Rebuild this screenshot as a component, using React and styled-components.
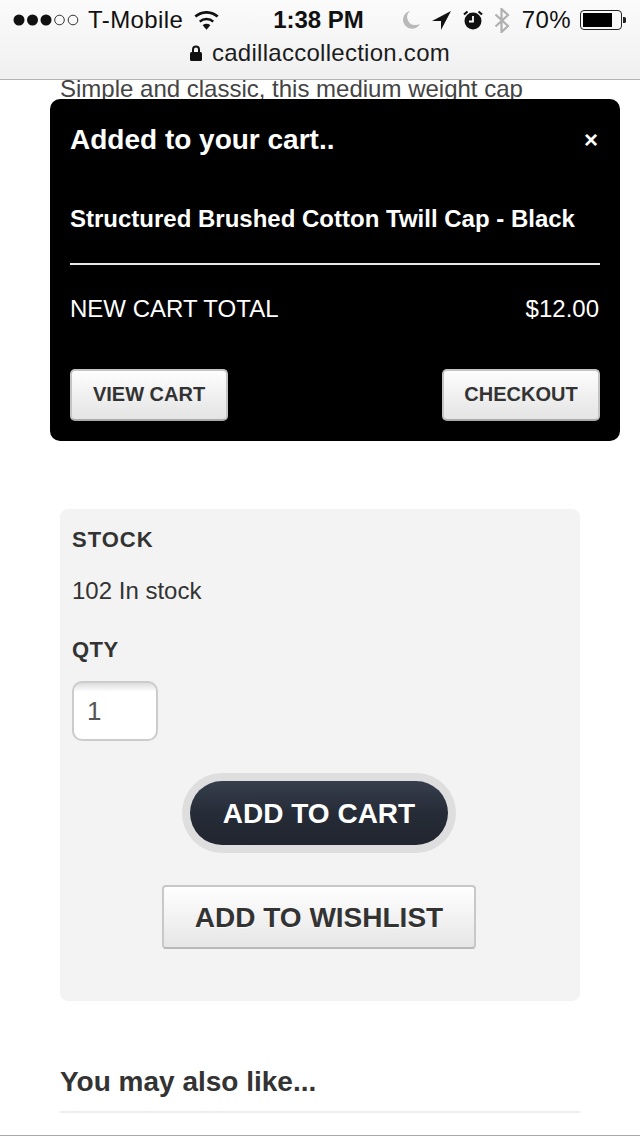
import styled, { createGlobalStyle } from 'styled-components';

const GlobalStyle = createGlobalStyle`
  html, body {
    margin: 0;
    padding: 0;
    background: #fff;
    font-family: "Liberation Sans", Arial, sans-serif;
    color: #333;
  }
`;

const Page = styled.div`
  position: relative;
  width: 640px;
  height: 1136px;
  overflow: hidden;
  box-sizing: border-box;
  border-bottom: 1px solid #aaa;
  background: #fff;
`;

// 1. browser chrome at the top
const Chrome = styled.header`
  position: relative;
  z-index: 1;
  box-sizing: border-box;
  height: 80px;
  border-bottom: 1px solid #b4b4b4;
  background: linear-gradient(#fbfbfb, #f0f0f0);
  color: #111;
`;

const StatusBar = styled.div`
  display: grid;
  grid-template-columns: 1fr auto 1fr;
  align-items: center;
  height: 40px;
  padding: 0 14px 0 13px;
  font-size: 24px;
`;

const StatusGroup = styled.div`
  display: flex;
  align-items: center;
  justify-content: ${(p) => (p.$end ? 'flex-end' : 'flex-start')};
`;

const Carrier = styled.span`
  margin: 0 11px 0 7px;
  letter-spacing: 0.4px;
`;

const Time = styled.span`
  font-weight: 700;
  font-size: 24px;
  margin-left: -2px;
`;

const Percent = styled.span`
  margin: 0 9px 0 12px;
  letter-spacing: 0.4px;
`;

const StatusIcon = styled.svg`
  display: block;
  flex: none;
  margin-left: ${(p) => p.$gap || 0}px;
`;

const UrlBar = styled.div`
  display: flex;
  align-items: center;
  justify-content: center;
  gap: 10px;
  height: 26px;
  font-size: 24px;
  letter-spacing: 0.27px;
  color: #1c1c1c;
`;

// 2. page content
const Main = styled.main`
  padding: 0 60px;
`;

const Intro = styled.p`
  margin: -1px 0 410px;
  font-size: 24px;
  line-height: 20px;
  color: #444;
  white-space: nowrap;
`;

const StockPanel = styled.section`
  box-sizing: border-box;
  height: 492px;
  padding: 16px 12px 0;
  border-radius: 8px;
  background: #f3f3f3;
`;

const Label = styled.div`
  font-size: 22px;
  line-height: 30px;
  font-weight: 700;
  letter-spacing: ${(p) => p.$spacing || 0}px;
  color: #333;
`;

const StockValue = styled.div`
  margin: 21px 0 29px;
  font-size: 24px;
  line-height: 30px;
  color: #333;
`;

const QtyBox = styled.div`
  box-sizing: border-box;
  width: 86px;
  height: 60px;
  margin-top: 16px;
  padding-left: 13px;
  border: 2px solid #ccc;
  border-radius: 10px;
  background: linear-gradient(#ddd, #fff 9px);
  font-size: 26px;
  line-height: 56px;
  color: #555;
`;

const PanelActions = styled.div`
  display: flex;
  flex-direction: column;
  align-items: center;
  margin: 40px 0 0 -2px;
`;

const CartButton = styled.button`
  width: 258px;
  height: 64px;
  padding: 2px 0 0;
  border: 0;
  border-radius: 32px;
  background: linear-gradient(#363e4d, #262c37 50%, #20252f);
  box-shadow: 0 0 0 8px #dedede;
  font: 700 28px "Liberation Sans", Arial, sans-serif;
  color: #fff;
`;

const WishlistButton = styled.button`
  box-sizing: border-box;
  width: 314px;
  height: 64px;
  margin-top: 40px;
  padding: 2px 0 0;
  border: 2px solid #c8c8c8;
  border-bottom-color: #b8b8b8;
  border-radius: 4px;
  background: linear-gradient(#fff, #e6e6e6);
  font: 700 28px "Liberation Sans", Arial, sans-serif;
  color: #333;
  text-shadow: 0 1px 1px rgba(255, 255, 255, 0.8);
`;

const Related = styled.h2`
  margin: 63px 0 0;
  padding-bottom: 11px;
  border-bottom: 2px solid #eee;
  font-size: 28px;
  line-height: 36px;
  font-weight: 700;
  color: #333;
`;

// 3. "added to cart" popup sitting over the page
const Popup = styled.aside`
  position: absolute;
  top: 99px;
  left: 50px;
  box-sizing: border-box;
  width: 570px;
  height: 342px;
  padding: 22px 20px 20px;
  border-radius: 10px;
  background: #000;
  color: #fff;
`;

const PopupHead = styled.div`
  display: flex;
  align-items: center;
  justify-content: space-between;
  height: 37px;
`;

const PopupTitle = styled.div`
  font-size: 28px;
  line-height: 37px;
  font-weight: 700;
`;

const Close = styled.span`
  margin-right: 2px;
  font-size: 24px;
  font-weight: 700;
`;

const ProductName = styled.div`
  margin-top: 46px;
  padding-bottom: 29px;
  border-bottom: 2px solid #e8e8e8;
  font-size: 24px;
  line-height: 30px;
  font-weight: 700;
  white-space: nowrap;
`;

const TotalRow = styled.div`
  display: flex;
  justify-content: space-between;
  margin-top: 29px;
  padding-right: 1px;
  font-size: 24px;
  line-height: 30px;
`;

const PopupActions = styled.div`
  display: flex;
  justify-content: space-between;
  margin-top: 45px;
`;

const PopupButton = styled.button`
  box-sizing: border-box;
  width: 158px;
  height: 52px;
  padding: 0 0 2px;
  border: 2px solid #c4c4c4;
  border-bottom-color: #aaa;
  border-radius: 5px;
  background: linear-gradient(#fdfdfd, #e4e4e4);
  font: 700 20px "Liberation Sans", Arial, sans-serif;
  color: #333;
`;

const Dots = () => (
  <StatusIcon width="68" height="14" viewBox="0 0 68 14">
    {[0, 1, 2, 3, 4].map((i) => (
      <circle
        key={i}
        cx={6 + i * 13.5}
        cy="7"
        r={i < 3 ? 5.5 : 4.8}
        fill={i < 3 ? '#111' : 'none'}
        stroke={i < 3 ? 'none' : '#333'}
        strokeWidth="1"
      />
    ))}
  </StatusIcon>
);

const Wifi = () => (
  <StatusIcon width="25" height="19" viewBox="0 0 26 19">
    <path d="M13 19 9 14.5a6 6 0 0 1 8 0z" fill="#111" />
    <path d="M6 10.6a10.5 10.5 0 0 1 14 0" fill="none" stroke="#111" strokeWidth="2.6" />
    <path d="M1.4 5.4a17.5 17.5 0 0 1 23.2 0" fill="none" stroke="#111" strokeWidth="2.8" />
  </StatusIcon>
);

const Lock = () => (
  <StatusIcon width="12" height="16" viewBox="0 0 12 16">
    <path d="M3 7V4.5a3 3 0 0 1 6 0V7" fill="none" stroke="#111" strokeWidth="2" />
    <rect x="0" y="7" width="12" height="9" rx="1.5" fill="#111" />
  </StatusIcon>
);

const Moon = () => (
  <StatusIcon width="18" height="18" viewBox="0 0 18 18">
    <path d="M8 0a9 9 0 1 0 10 13 9.5 9.5 0 0 1-4 1A8 8 0 0 1 8 0z" fill="#b9b9b9" />
  </StatusIcon>
);

const LocationArrow = () => (
  <StatusIcon $gap={12} width="19" height="19" viewBox="0 0 19 19">
    <path d="M19 0 0 10h9v9z" fill="#111" />
  </StatusIcon>
);

const Alarm = () => (
  <StatusIcon $gap={12} width="20" height="20" viewBox="0 0 20 20">
    <circle cx="10" cy="11" r="8.5" fill="#111" />
    <path d="M10 6v5.5H6" fill="none" stroke="#fff" strokeWidth="1.8" />
    <path d="M1 4.5 4.5 1.5M19 4.5 15.5 1.5" stroke="#111" strokeWidth="2.2" />
  </StatusIcon>
);

const Bluetooth = () => (
  <StatusIcon $gap={11} width="16" height="25" viewBox="0 0 16 25">
    <path d="M1.5 6.5 14 18l-6.5 6V1L14 7 1.5 18.5" fill="none" stroke="#b0b0b0" strokeWidth="2.2" />
  </StatusIcon>
);

const Battery = () => (
  <StatusIcon width="46" height="20" viewBox="0 0 46 20">
    <rect x="0.5" y="0.5" width="41" height="19" rx="3.5" fill="none" stroke="#222" />
    <rect x="3" y="3" width="29" height="14" fill="#000" />
    <path d="M43 7h1.5a1.5 1.5 0 0 1 1.5 1.5v3a1.5 1.5 0 0 1-1.5 1.5H43z" fill="#222" />
  </StatusIcon>
);

const App = () => {
  return (
    <>
      <GlobalStyle />
      <Page>
        <Chrome>
          <StatusBar>
            <StatusGroup>
              <Dots />
              <Carrier>T-Mobile</Carrier>
              <Wifi />
            </StatusGroup>
            <Time>1:38 PM</Time>
            <StatusGroup $end>
              <Moon />
              <LocationArrow />
              <Alarm />
              <Bluetooth />
              <Percent>70%</Percent>
              <Battery />
            </StatusGroup>
          </StatusBar>
          <UrlBar>
            <Lock />
            cadillaccollection.com
          </UrlBar>
        </Chrome>

        <Main>
          <Intro>Simple and classic, this medium weight cap</Intro>
          <StockPanel>
            <Label $spacing={1}>STOCK</Label>
            <StockValue>102 In stock</StockValue>
            <Label $spacing={0.5}>QTY</Label>
            <QtyBox>1</QtyBox>
            <PanelActions>
              <CartButton>ADD TO CART</CartButton>
              <WishlistButton>ADD TO WISHLIST</WishlistButton>
            </PanelActions>
          </StockPanel>
          <Related>You may also like...</Related>
        </Main>

        <Popup>
          <PopupHead>
            <PopupTitle>Added to your cart..</PopupTitle>
            <Close>×</Close>
          </PopupHead>
          <ProductName>Structured Brushed Cotton Twill Cap - Black</ProductName>
          <TotalRow>
            <span>NEW CART TOTAL</span>
            <span>$12.00</span>
          </TotalRow>
          <PopupActions>
            <PopupButton>VIEW CART</PopupButton>
            <PopupButton>CHECKOUT</PopupButton>
          </PopupActions>
        </Popup>
      </Page>
    </>
  );
};

export default App;
